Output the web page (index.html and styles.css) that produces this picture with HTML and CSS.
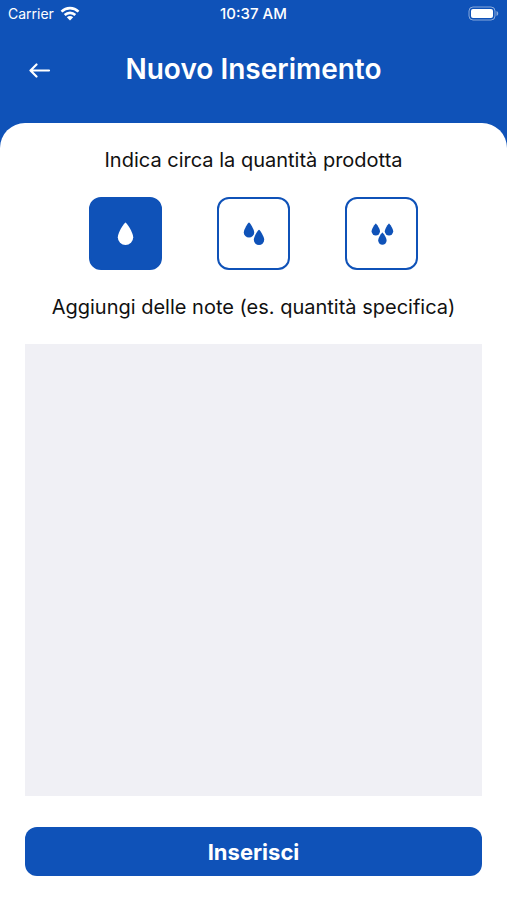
FILE: index.html
```html
<!DOCTYPE html>
<html lang="it">
<head>
<meta charset="utf-8">
<meta name="viewport" content="width=device-width, initial-scale=1">
<title>Nuovo Inserimento</title>
<link rel="stylesheet" href="styles.css">
</head>
<body>
<div class="status">
  <div class="carrier">
    <span>Carrier</span>
    <svg width="20" height="16" viewBox="0 0 20 16" aria-hidden="true">
      <g fill="none" stroke="currentColor" stroke-width="2.6">
        <path d="M1.5 5.6C6.3 .9 13.7 .9 18.5 5.6"/>
        <path d="M4.7 9C7.7 6.1 12.3 6.1 15.3 9"/>
      </g>
      <path d="M6.8 11.3C8.6 9.6 11.4 9.6 13.2 11.3L10 14.6Z" fill="currentColor"/>
    </svg>
  </div>
  <time>10:37 AM</time>
  <svg class="battery" width="31" height="15" viewBox="0 0 31 15" aria-hidden="true">
    <rect x="1" y="1" width="26" height="13" rx="4" fill="none" stroke="currentColor" opacity=".5"/>
    <rect x="3" y="3" width="22" height="9" rx="2" fill="currentColor"/>
    <path d="M28.5 5C30.8 6 30.8 9 28.5 10Z" fill="currentColor" opacity=".5"/>
  </svg>
</div>
<header class="header">
  <button class="back" type="button" aria-label="Indietro">
    <svg width="22" height="18" viewBox="0 0 22 18" aria-hidden="true">
      <path d="M20 10.5H1.5M7.5 4.5L1.5 10.5L7.5 16.5" fill="none" stroke="currentColor" stroke-width="2.2" stroke-linecap="round" stroke-linejoin="round"/>
    </svg>
  </button>
  <h1>Nuovo Inserimento</h1>
</header>
<main class="panel">
  <h2 class="label" id="amount">Indica circa la quantità prodotta</h2>
  <div class="amounts" role="group" aria-labelledby="amount">
    <button class="amount selected" type="button" aria-label="Poca" aria-pressed="true">
      <svg width="24" height="24" viewBox="0 0 24 24" aria-hidden="true">
        <path d="M12.5 .5C13.6 .5 20.2 10.6 20.2 15.2A7.7 7.7 0 0 1 4.8 15.2C4.8 10.6 11.4 .5 12.5 .5Z"/>
      </svg>
    </button>
    <button class="amount" type="button" aria-label="Media" aria-pressed="false">
      <svg width="24" height="24" viewBox="0 0 24 24" aria-hidden="true">
        <path d="M7 .5C7.8 .5 12.2 7.3 12.2 10.4A5.2 5.2 0 0 1 1.8 10.4C1.8 7.3 6.2 .5 7 .5Z"/>
        <path d="M17 7.8C17.8 7.8 22.2 14.6 22.2 17.7A5.2 5.2 0 0 1 11.8 17.7C11.8 14.6 16.2 7.8 17 7.8Z"/>
      </svg>
    </button>
    <button class="amount" type="button" aria-label="Molta" aria-pressed="false">
      <svg width="24" height="24" viewBox="0 0 24 24" aria-hidden="true">
        <path d="M5.8 1.4C6.4 1.4 10 6.8 10 9.3A4.2 4.2 0 0 1 1.6 9.3C1.6 6.8 5.2 1.4 5.8 1.4Z"/>
        <path d="M19 1.4C19.6 1.4 23.2 6.8 23.2 9.3A4.2 4.2 0 0 1 14.8 9.3C14.8 6.8 18.4 1.4 19 1.4Z"/>
        <path d="M12.4 10.6C13 10.6 16.6 16 16.6 18.5A4.2 4.2 0 0 1 8.2 18.5C8.2 16 11.8 10.6 12.4 10.6Z"/>
      </svg>
    </button>
  </div>
  <label class="label" for="notes">Aggiungi delle note (es. quantità specifica)</label>
  <textarea class="notes" id="notes"></textarea>
  <button class="submit" type="button">Inserisci</button>
</main>
</body>
</html>
```
FILE: styles.css
```css
* {
  box-sizing: border-box;
}

:root {
  --blue: #0f52b8;
}

body {
  margin: 0;
  min-height: 100vh;
  display: flex;
  flex-direction: column;
  background: var(--blue);
  color: #fff;
  font-family: Inter, "Liberation Sans", sans-serif;
}

button {
  padding: 0;
  border: 0;
  font: inherit;
  cursor: pointer;
}

svg {
  display: block;
}

.status {
  display: grid;
  grid-template-columns: 1fr auto 1fr;
  align-items: center;
  height: 27px;
  padding: 0 8px;
  font-size: 14px;
}

.carrier {
  display: flex;
  align-items: center;
  gap: 6px;
}

.status time {
  font-size: 15px;
  font-weight: 500;
}

.battery {
  justify-self: end;
}

.header {
  display: grid;
  grid-template-columns: 44px 1fr 44px;
  align-items: center;
  height: 96px;
  padding: 0 18px 12px;
}

.back {
  display: grid;
  place-items: center;
  height: 44px;
  background: none;
  color: #fff;
}

.header h1 {
  margin: 0;
  font-size: 28px;
  line-height: 36px;
  font-weight: 600;
  text-align: center;
}

.panel {
  flex: 1;
  display: flex;
  flex-direction: column;
  padding: 24px 25px;
  border-radius: 25px 25px 0 0;
  background: #fff;
  color: #111;
}

.label {
  margin: 0;
  font-size: 20px;
  line-height: 26px;
  font-weight: 400;
  text-align: center;
}

.amounts {
  display: flex;
  justify-content: space-between;
  width: 72%;
  margin: 24px auto;
}

.amount {
  display: grid;
  place-items: center;
  width: 73px;
  height: 73px;
  border: 2px solid var(--blue);
  border-radius: 12px;
  background: #fff;
  color: var(--blue);
}

.amount svg {
  fill: currentColor;
}

.amount.selected {
  background: var(--blue);
  color: #fff;
}

.notes {
  flex: 1;
  width: 100%;
  margin: 24px 0 31px;
  padding: 12px;
  border: 0;
  background: #f0f0f5;
  font: inherit;
  resize: none;
}

.submit {
  height: 49px;
  border-radius: 12px;
  background: var(--blue);
  color: #fff;
  font-size: 22px;
  font-weight: 700;
}
```
